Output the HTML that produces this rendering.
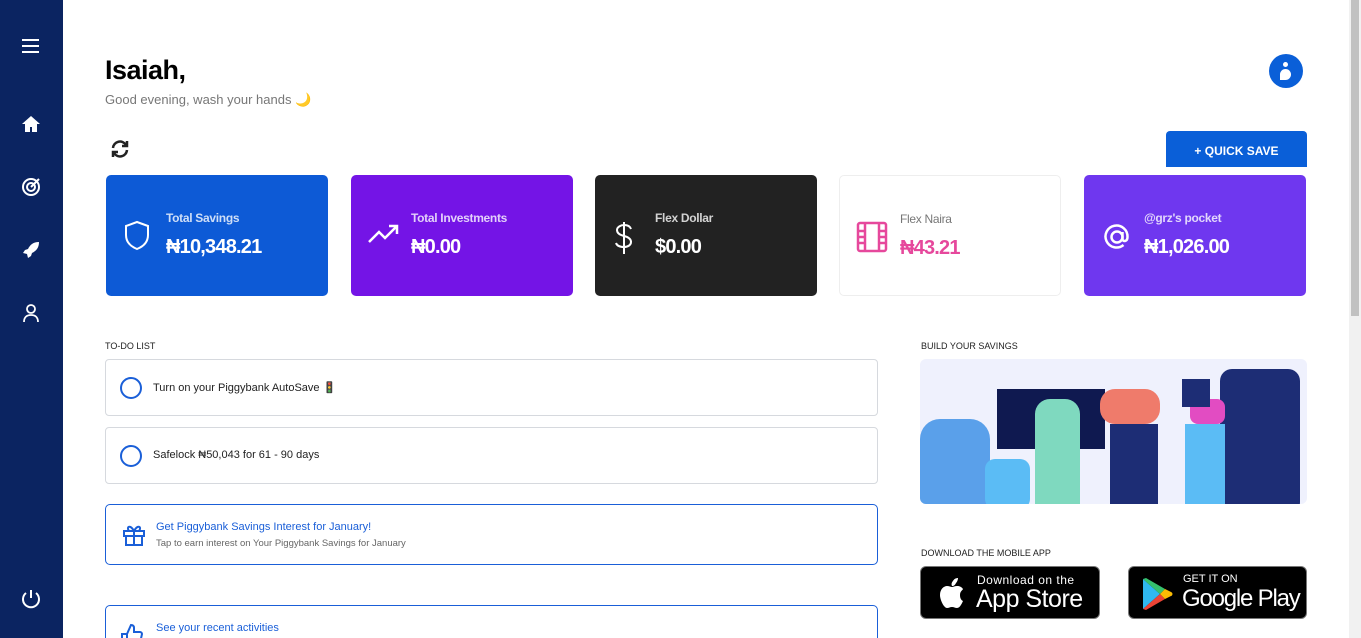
<!DOCTYPE html>
<html style="width:1361px;height:638px;overflow:hidden"><head><meta charset="utf-8"><style>
*{box-sizing:border-box;margin:0;padding:0}
body{width:1361px;height:638px;overflow:hidden;background:#fff;font-family:"Liberation Sans",sans-serif;position:relative}
.side{position:absolute;left:0;top:0;width:63px;height:638px;background:#0b2461}
.side svg{position:absolute;left:21px}
.sb{position:absolute;left:1349px;top:0;width:12px;height:638px;background:#f1f1f1}
.sb div{position:absolute;left:2px;top:0;width:8px;height:316px;background:#c1c1c1}
.a{position:absolute}
.card{position:absolute;top:175px;width:222px;height:121px;border-radius:5px;overflow:hidden}
.card .t{position:absolute;left:60px;top:36px;font-size:12px;font-weight:bold;color:rgba(255,255,255,.8);letter-spacing:-.3px}
.card .v{position:absolute;left:60px;top:61px;font-size:20px;font-weight:bold;color:#fff;letter-spacing:-.8px}
.card svg{position:absolute;left:16px;top:45px}
.todo{position:absolute;left:105px;width:773px;border:1px solid #d6d9de;border-radius:4px;height:57px}
.todo .c{position:absolute;left:14px;top:17px;width:22px;height:22px;border:2px solid #1a5fd8;border-radius:50%}
.todo .x{position:absolute;left:47px;top:21px;font-size:11px;color:#222}
.lbl{position:absolute;font-size:9px;color:#222}
.blue{position:absolute;left:105px;width:773px;border:1px solid #1a5fd8;border-radius:5px}
.btn{position:absolute;top:566px;height:53px;background:#000;border-radius:6px;border:1px solid #777;color:#fff}
</style></head><body>
<div class="side">
<svg style="top:38px" width="20" height="16" viewBox="0 0 20 16"><path d="M1 2h17M1 8h17M1 14h17" stroke="#fff" stroke-width="2"/></svg>
<svg style="top:114px" width="20" height="20" viewBox="0 0 20 20"><path d="M10 2L1 10h3v8h5v-5h2v5h5v-8h3z" fill="#fff"/></svg>
<svg style="top:177px" width="20" height="20" viewBox="0 0 20 20" fill="none" stroke="#fff" stroke-width="2"><circle cx="10" cy="10" r="8"/><circle cx="10" cy="10" r="4"/><path d="M10 10L18 2"/></svg>
<svg style="top:240px" width="20" height="20" viewBox="0 0 20 20"><path d="M18 2c-6 0-9 3-11 7L4 10l-2 3 4 1 1 4 3-2 1-3c4-2 7-5 7-11z" fill="#fff"/></svg>
<svg style="top:303px" width="20" height="20" viewBox="0 0 20 20" fill="none" stroke="#fff" stroke-width="1.8"><circle cx="10" cy="6" r="4"/><path d="M3 19c0-5 3-7 7-7s7 2 7 7"/></svg>
<svg style="top:589px" width="20" height="20" viewBox="0 0 20 20" fill="none" stroke="#fff" stroke-width="2"><path d="M10 1v8M5 4a8 8 0 1 0 10 0"/></svg>
</div>
<div class="sb"><div></div></div>
<div class="a" style="left:105px;top:55px;font-size:27px;font-weight:bold;color:#000;letter-spacing:-.5px">Isaiah,</div>
<div class="a" style="left:105px;top:92px;font-size:13px;color:#777">Good evening, wash your hands <span style="color:#e6a700">🌙</span></div>
<div class="a" style="left:1269px;top:54px;width:34px;height:34px;border-radius:50%;background:#0a5fd8"><div style="position:absolute;left:14px;top:8px;width:5px;height:5px;border-radius:50%;background:#fff"></div><div style="position:absolute;left:11px;top:15px;width:11px;height:11px;border-radius:50% 50% 50% 0;background:#fff"></div></div>
<svg class="a" style="left:110px;top:139px" width="20" height="20" viewBox="0 0 20 20" fill="none" stroke="#222" stroke-width="2.5"><path d="M3 9a7 7 0 0 1 13-3M17 11a7 7 0 0 1-13 3"/><path d="M17 2v5h-5M3 18v-5h5" fill="none"/></svg>
<div class="a" style="left:1166px;top:131px;width:141px;height:36px;background:#0a5fd8;border-radius:4px 4px 0 0;color:#fff;font-size:12px;font-weight:bold;text-align:center;line-height:40px">+ QUICK SAVE</div>

<div class="card" style="left:106px;background:#0d5ad6"><svg width="30" height="32" viewBox="0 0 30 32" fill="none" stroke="#fff" stroke-width="2"><path d="M15 2l11 4v9c0 8-6 12-11 14C10 27 4 23 4 15V6z"/></svg><div class="t">Total Savings</div><div class="v">₦10,348.21</div></div>
<div class="card" style="left:351px;background:#7414e6"><svg width="34" height="30" viewBox="0 0 34 30" fill="none" stroke="#fff" stroke-width="2.5"><path d="M2 22l10-10 6 6 12-12M22 6h8v8"/></svg><div class="t">Total Investments</div><div class="v">₦0.00</div></div>
<div class="card" style="left:595px;background:#222"><svg width="26" height="36" viewBox="0 0 26 36" fill="none" stroke="#fff" stroke-width="2"><path d="M13 2v32M20 9c-1-3-4-4-7-4s-7 2-7 5 3 5 7 6 7 3 7 6-3 5-7 5-7-1-8-4"/></svg><div class="t">Flex Dollar</div><div class="v">$0.00</div></div>
<div class="card" style="left:839px;background:#fff;border:1px solid #eee"><svg width="32" height="32" viewBox="0 0 32 32" fill="none" stroke="#e6489c" stroke-width="2.5"><rect x="2" y="2" width="28" height="28" rx="2"/><path d="M9 2v28M23 2v28M2 10h7M2 16h7M2 22h7M23 10h7M23 16h7M23 22h7"/></svg><div class="t" style="color:#777;font-weight:normal">Flex Naira</div><div class="v" style="color:#e6489c">₦43.21</div></div>
<div class="card" style="left:1084px;background:#6f37ef"><svg width="34" height="34" viewBox="0 0 34 34" fill="none" stroke="#fff" stroke-width="2.5"><circle cx="17" cy="17" r="5.5"/><path d="M22.5 12v7c0 3 5 3 5-2a11 11 0 1 0-4 8"/></svg><div class="t">@grz's pocket</div><div class="v">₦1,026.00</div></div>

<div class="lbl" style="left:105px;top:341px">TO-DO LIST</div>
<div class="todo" style="top:359px"><div class="c"></div><div class="x">Turn on your Piggybank AutoSave 🚦</div></div>
<div class="todo" style="top:427px"><div class="c"></div><div class="x">Safelock ₦50,043 for 61 - 90 days</div></div>
<div class="blue" style="top:504px;height:61px">
<svg class="a" style="left:16px;top:18px" width="24" height="24" viewBox="0 0 24 24" fill="none" stroke="#1a5fd8" stroke-width="2"><rect x="2" y="8" width="20" height="5"/><rect x="4" y="13" width="16" height="9"/><path d="M12 8v14M12 8C8 1 4 4 7 8M12 8c4-7 8-4 5 0"/></svg>
<div class="a" style="left:50px;top:16px;font-size:11px;color:#1a5fd8">Get Piggybank Savings Interest for January!</div>
<div class="a" style="left:50px;top:33px;font-size:9.5px;color:#666">Tap to earn interest on Your Piggybank Savings for January</div>
</div>
<div class="blue" style="top:605px;height:50px">
<svg class="a" style="left:14px;top:17px" width="24" height="24" viewBox="0 0 24 24" fill="none" stroke="#1a5fd8" stroke-width="2"><path d="M2 11h5v11H2zM7 11l4-9c2 0 3 1 3 3v4h6c1 0 2 1 2 2l-2 9c0 1-1 2-2 2H7"/></svg>
<div class="a" style="left:50px;top:16px;font-size:11px;color:#1a5fd8">See your recent activities</div>
</div>

<div class="lbl" style="left:921px;top:341px">BUILD YOUR SAVINGS</div>
<div class="a" style="left:920px;top:359px;width:387px;height:145px;background:#eff1fd;border-radius:6px;overflow:hidden">
<div class="a" style="left:77px;top:30px;width:108px;height:60px;background:#0f1950"></div>
<div class="a" style="left:300px;top:10px;width:80px;height:145px;background:#1d2d75;border-radius:12px"></div>
<div class="a" style="left:0;top:60px;width:70px;height:90px;background:#5aa0ea;border-radius:20px 20px 0 0"></div>
<div class="a" style="left:65px;top:100px;width:45px;height:50px;background:#5bbcf5;border-radius:10px"></div>
<div class="a" style="left:115px;top:40px;width:45px;height:110px;background:#7fd9bf;border-radius:15px 15px 0 0"></div>
<div class="a" style="left:180px;top:30px;width:60px;height:35px;background:#ef7b6b;border-radius:15px"></div>
<div class="a" style="left:190px;top:65px;width:48px;height:85px;background:#1d2d75"></div>
<div class="a" style="left:270px;top:40px;width:35px;height:25px;background:#e24cc2;border-radius:8px"></div>
<div class="a" style="left:265px;top:65px;width:40px;height:85px;background:#5bbcf5"></div>
<div class="a" style="left:262px;top:20px;width:28px;height:28px;background:#1d2d75"></div>
</div>

<div class="lbl" style="left:921px;top:548px">DOWNLOAD THE MOBILE APP</div>
<div class="btn" style="left:920px;width:180px">
<svg class="a" style="left:15px;top:10px" width="30" height="34" viewBox="0 0 30 34"><path d="M24 18c0-4 3-5 3-6-2-3-5-3-6-3-2 0-4 1-5 1s-3-1-5-1c-3 0-7 3-7 9 0 5 4 13 7 13 2 0 3-1 5-1s3 1 5 1c3 0 5-5 6-7-2-1-3-3-3-6zM20 6c1-1 2-3 2-5-2 0-4 1-5 3-1 1-2 3-1 5 2 0 3-1 4-3z" fill="#fff"/></svg>
<div class="a" style="left:56px;top:6px;font-size:12px;letter-spacing:.5px">Download on the</div>
<div class="a" style="left:55px;top:18px;font-size:25px;letter-spacing:-.5px">App Store</div>
</div>
<div class="btn" style="left:1128px;width:179px">
<svg class="a" style="left:12px;top:10px" width="32" height="34" viewBox="0 0 32 34"><path d="M2 2l17 15L2 32z" fill="#2fb8f0"/><path d="M2 2l17 15 5-5L5 1z" fill="#35c16e"/><path d="M2 32l17-15 5 5L5 33z" fill="#ea4335"/><path d="M19 17l5-5 6 3c2 1 2 3 0 4l-6 3z" fill="#fbbc04"/></svg>
<div class="a" style="left:54px;top:6px;font-size:11px">GET IT ON</div>
<div class="a" style="left:53px;top:18px;font-size:24px;letter-spacing:-1.2px">Google Play</div>
</div>
</body></html>
